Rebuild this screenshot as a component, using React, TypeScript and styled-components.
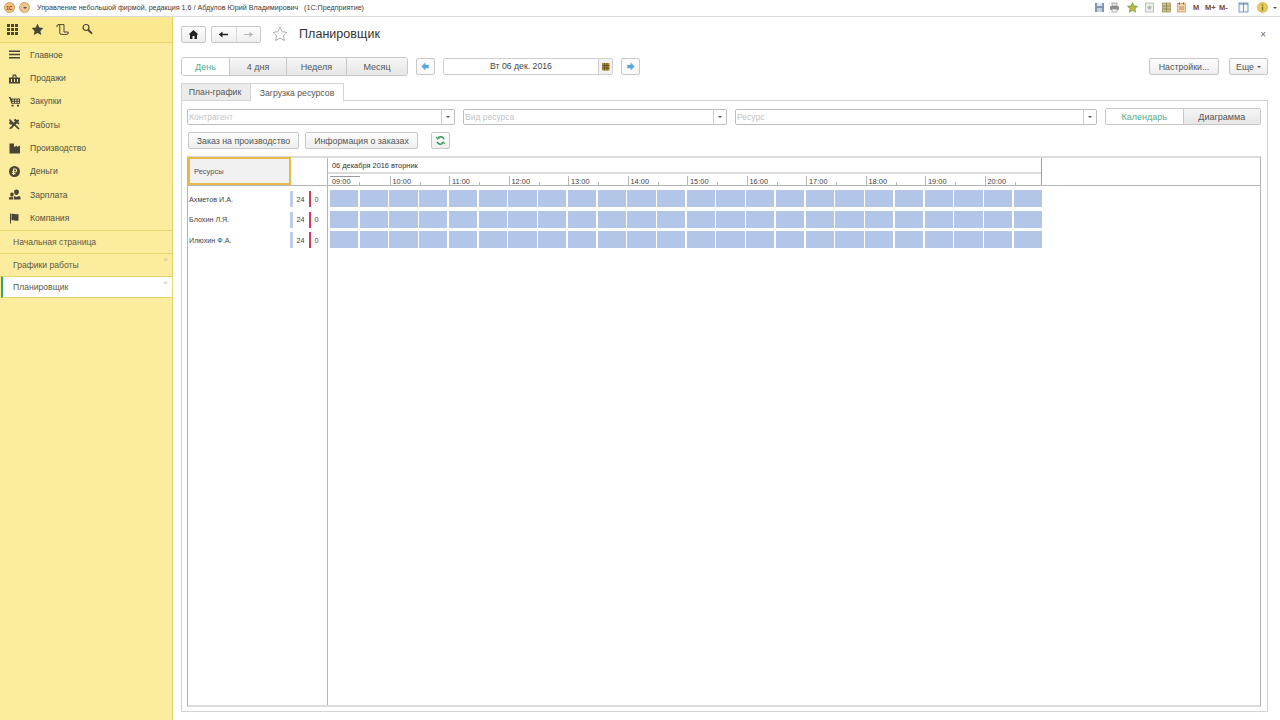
import React from 'react';
import styled, { createGlobalStyle } from 'styled-components';

const Global = createGlobalStyle`
  html, body { margin: 0; padding: 0; background: #fff; }
  body { font-family: "Liberation Sans", Arial, sans-serif; color: #4a4a4a; overflow: hidden; }
  * { box-sizing: border-box; }
`;

const Page = styled.div`width: 1280px; height: 720px; display: flex; flex-direction: column; overflow: hidden;`;

const TitleBar = styled.div`
  height: 17px; flex: none; display: flex; align-items: center; padding: 0 3px 1px 4px;
  background: #fff; border-bottom: 1px solid #d9d9d9;
`;
const Orb = styled.div<{ $c: string }>`
  width: 11px; height: 11px; border-radius: 50%; flex: none; margin-right: 4px;
  background: ${p => p.$c}; border: 1px solid #c9a36a; display: flex; align-items: center; justify-content: center;
  font-size: 5px; font-weight: 700; color: #c0281c;
`;
const TitleText = styled.div`font-size: 7.15px; margin-left: 3px; color: #3a3a3a; white-space: pre; flex: 1;`;
const Tools = styled.div`display: flex; align-items: center; height: 14px;`;
const ToolIcon = styled.svg<{ $ml: number }>`width: 11px; height: 11px; flex: none; margin-left: ${p => p.$ml}px;`;
const MemText = styled.span<{ $ml: number }>`font-size: 7.5px; font-weight: 700; color: #7a4a2a; margin-left: ${p => p.$ml}px; width: 10px; white-space: nowrap;`;
const ToolCaret = styled.i`width: 0; height: 0; border: 2px solid transparent; border-top: 2.5px solid #555; border-bottom: 0; display: block; margin-left: 5px;`;

const Body = styled.div`flex: 1; display: flex; min-height: 0;`;

const Sidebar = styled.aside`
  width: 173px; flex: none; background: #fbec9e; border-right: 1px solid #e3d270;
  display: flex; flex-direction: column;
`;
const SideTop = styled.div`
  height: 26px; display: flex; align-items: center; padding-left: 6px; gap: 12px;
  border-bottom: 1px solid #e5d36c; background: #fbe98f; flex: none;
`;
const SideIcon = styled.svg`width: 13px; height: 13px; flex: none; color: #4a4536;`;
const Nav = styled.nav`height: 187px; flex: none; display: flex; flex-direction: column;`;
const NavRow = styled.div`
  height: 23.35px; flex: none; display: flex; align-items: center; padding-left: 8px; gap: 9px;
  font-size: 8.6px; color: #55513f;
`;
const NavIcon = styled.svg`width: 13px; height: 13px; flex: none; color: #4a4536;`;
const OpenTab = styled.div<{ $active?: boolean }>`
  position: relative; height: 22.8px; flex: none; display: flex; align-items: center; padding-left: 13px;
  font-size: 8.6px; color: #5f5a46;
  background: ${p => (p.$active ? '#fff' : '#fbec9e')};
  border-top: 1px solid #e5d36c;
  ${p => p.$active ? 'border-left: 2px solid #2ea876; padding-left: 10px; margin-left: 1px; border-bottom: 1px solid #e5d36c;' : ''}
`;
const TabClose = styled.span`position: absolute; right: 4px; top: 1px; font-size: 8px; color: #c9c09a;`;

const Main = styled.main`flex: 1; min-width: 0; display: flex; flex-direction: column; padding: 8px 12px 8px 8px;`;

const HeadRow = styled.div`height: 18px; flex: none; display: flex; align-items: center;`;
const SmallBtn = styled.div`
  height: 17px; display: flex; align-items: center; justify-content: center;
  border: 1px solid #c8c8c8; border-radius: 2px; background: linear-gradient(#fdfdfd, #eeeeee);
`;
const HomeBtn = styled(SmallBtn)`width: 25px;`;
const NavPair = styled(SmallBtn)`width: 50px; margin-left: 5px;`;
const NavHalf = styled.div<{ $sep?: boolean }>`
  flex: 1; height: 100%; display: flex; align-items: center; justify-content: center;
  ${p => p.$sep ? 'border-right: 1px solid #d8d8d8;' : ''}
`;
const Glyph = styled.svg`width: 11px; height: 11px; flex: none;`;
const StarWrap = styled.svg`width: 16px; height: 16px; margin-left: 11px; flex: none;`;
const PageTitle = styled.div`font-size: 12.5px; color: #333; margin-left: 11px; letter-spacing: .05px; flex: 1;`;
const CloseX = styled.div`font-size: 10px; color: #666; margin-right: 2px;`;

const PeriodRow = styled.div`height: 19px; margin-top: 14px; flex: none; display: flex; align-items: center;`;
const Segments = styled.div`display: flex; height: 19px; border: 1px solid #c8c8c8; border-radius: 3px; overflow: hidden;`;
const Segment = styled.div<{ $w: number; $on?: boolean }>`
  width: ${p => p.$w}px; display: flex; align-items: center; justify-content: center; font-size: 9px;
  color: ${p => (p.$on ? '#4fae8a' : '#555')};
  background: ${p => (p.$on ? '#fff' : 'linear-gradient(#f6f6f6, #e6e6e6)')};
  & + & { border-left: 1px solid #c8c8c8; }
`;
const ArrowBtn = styled(SmallBtn)<{ $ml: number }>`width: 19px; margin-left: ${p => p.$ml}px; background: #fbfbfb;`;
const DateField = styled.div`
  width: 170px; height: 17px; margin-left: 8px; display: flex; border: 1px solid #cfcfcf; border-radius: 2px; background: #fff;
`;
const DateText = styled.div`flex: 1; text-align: center; font-size: 8.7px; line-height: 15px; color: #444;`;
const CalBtn = styled.div`width: 14px; border-left: 1px solid #cfcfcf; background: #f2f2f2; display: flex; align-items: center; justify-content: center;`;
const Spacer = styled.div`flex: 1;`;
const TextBtn = styled(SmallBtn)<{ $w: number; $ml?: number }>`
  width: ${p => p.$w}px; margin-left: ${p => p.$ml ?? 0}px; font-size: 8.8px; color: #555; white-space: nowrap;
`;
const BtnCaret = styled.i`width: 0; height: 0; border: 2px solid transparent; border-top: 2.5px solid #555; border-bottom: 0; display: block; margin-left: 3px;`;

const TabsRow = styled.div`height: 18px; margin-top: 7px; flex: none; display: flex; align-items: flex-end; position: relative; z-index: 1;`;
const Tab = styled.div<{ $w: number; $on?: boolean }>`
  width: ${p => p.$w}px; height: 18px; display: flex; align-items: center; justify-content: center;
  font-size: 8.7px; color: #555; border: 1px solid #d4d4d4;
  ${p => p.$on ? 'background: #fff; border-bottom-color: #fff; border-left: 0; height: 19px; margin-bottom: -1px;' : 'background: #ececec; padding-right: 2px;'}
`;

const Panel = styled.section`
  flex: 1; min-height: 0; margin-top: -1px; border: 1px solid #d4d4d4; display: flex; flex-direction: column;
  padding: 7px 6px 4px 5px;
`;
const FilterRow = styled.div`height: 17px; flex: none; display: flex; align-items: center;`;
const Combo = styled.div<{ $w: number; $ml?: number }>`
  width: ${p => p.$w}px; height: 16px; margin-left: ${p => p.$ml ?? 0}px; display: flex;
  border: 1px solid #bdbdbd; border-radius: 2px; background: #fff;
`;
const ComboText = styled.div`flex: 1; font-size: 8.5px; line-height: 14px; padding-left: 1px; color: #c4c4c4;`;
const ComboDrop = styled.div`width: 13px; border-left: 1px solid #cfcfcf; display: flex; align-items: center; justify-content: center;`;
const Caret = styled.i`width: 0; height: 0; border: 2px solid transparent; border-top: 2.5px solid #555; border-bottom: 0; display: block;`;
const ViewSwitch = styled.div`
  margin-left: 8px; display: flex; height: 17px; width: 156px; border: 1px solid #c8c8c8; border-radius: 2px; overflow: hidden;
`;
const ViewOpt = styled.div<{ $on?: boolean }>`
  flex: 1; display: flex; align-items: center; justify-content: center; font-size: 9px;
  color: ${p => (p.$on ? '#4fae8a' : '#555')};
  background: ${p => (p.$on ? '#fff' : 'linear-gradient(#f6f6f6, #e6e6e6)')};
  & + & { border-left: 1px solid #c8c8c8; }
`;
const ActionRow = styled.div`height: 17px; margin-top: 7px; padding-left: 1px; flex: none; display: flex; align-items: center;`;

const Grid = styled.div`
  flex: 1; min-height: 0; margin-top: 7px; display: flex; flex-direction: column; background: #fff;
  border: 1px solid #b5b5b5; border-top: 2px solid #dcdcdc; border-bottom: 2px solid #dcdcdc; width: 1074px;
`;
const GridHead = styled.div`height: 27px; flex: none; display: flex; border-bottom: 1px solid #b5b5b5; box-sizing: content-box;`;
const ResHead = styled.div`
  width: 103px; height: 28px; margin-top: -1px; flex: none; border: 2px solid #e6bb45; background: #f1f1f1;
  padding: 1px 0 0 4px; display: flex; align-items: center; font-size: 7.5px; color: #555;
`;
const ResGap = styled.div`width: 37px; flex: none; border-right: 1px solid #b5b5b5;`;
const TimeHead = styled.div`width: 714px; flex: none; border-right: 1px solid #9d9d9d; display: flex; flex-direction: column; overflow: hidden;`;
const DateLine = styled.div`height: 16px; flex: none; padding: 3px 0 0 4px; font-size: 7.4px; line-height: 10px; color: #333; border-bottom: 2px solid #dcdcdc;`;
const Hours = styled.div`flex: 1; margin-top: 2px; display: grid; grid-template-columns: repeat(12, 59.5px); padding-left: 2px;`;
const Hour = styled.div<{ $first?: boolean }>`
  position: relative; font-size: 7.4px; line-height: 9px; color: #444; padding: 1px 0 0 2px;
  border-left: 1px solid #b5b5b5;
  ${p => p.$first ? 'border-left: 0; background: linear-gradient(#9a9a9a, #9a9a9a) 0 0 / 30px 1px no-repeat;' : ''}
  &::after { content: ''; position: absolute; left: 29px; bottom: 1px; height: 3px; border-left: 1px solid #b5b5b5; }
`;
const GridBody = styled.div`flex: 1; min-height: 0; display: flex;`;
const ResCol = styled.div`width: 140px; flex: none; border-right: 1px solid #b5b5b5; padding-top: 3px;`;
const ResRow = styled.div`height: 20.5px; display: flex; align-items: center; font-size: 7.2px; color: #444;`;
const ResName = styled.div`width: 102px; padding-left: 1px; white-space: nowrap;`;
const LoadBar = styled.i<{ $red?: boolean }>`
  display: block; flex: none; height: 16px; width: ${p => (p.$red ? 2 : 3)}px;
  background: ${p => (p.$red ? '#d23a5e' : '#c0cbe6')};
`;
const LoadNum = styled.span<{ $w: number }>`width: ${p => p.$w}px; padding-right: 1px; text-align: center; color: #444;`;
const Chart = styled.div`width: 712px; margin-left: 2px; padding-top: 4px; flex: none;`;
const ChartRow = styled.div`height: 20.5px; display: grid; grid-template-columns: repeat(24, 1fr); column-gap: 1.5px;`;
const Slot = styled.div`height: 17px; background: #b4c6e8;`;

const Save = (
  <>
    <rect x="1" y="1" width="9" height="9" fill="#7f97b5" />
    <rect x="3" y="1" width="5" height="3" fill="#dfe7f0" />
    <rect x="3" y="6" width="5" height="4" fill="#c5d0de" />
  </>
);
const Print = (
  <>
    <rect x="3" y="1" width="5" height="3" fill="#e3e3e3" stroke="#888" strokeWidth=".6" />
    <rect x="1" y="4" width="9" height="4" rx="1" fill="#8d8d8d" />
    <rect x="3" y="7" width="5" height="3" fill="#f2f2f2" stroke="#888" strokeWidth=".6" />
  </>
);
const GreenStar = (
  <>
    <path d="M5.5 .5l1.6 3.3 3.5.5-2.6 2.4.7 3.6-3.2-1.8-3.2 1.8.7-3.6L.4 4.3l3.5-.5z" fill="#a3b94a" stroke="#5e8d2f" strokeWidth=".5" />
    <rect x="4" y="5" width="3" height="3" fill="#e6a93c" />
  </>
);
const DocStar = (
  <>
    <rect x="1.5" y="1" width="8" height="9" fill="#eef0ec" stroke="#a3aca5" strokeWidth=".7" />
    <path d="M5.5 3l.8 1.6 1.7.2-1.2 1.2.3 1.7-1.6-.8-1.6.8.3-1.7L3 4.8l1.7-.2z" fill="#aab7a8" />
  </>
);
const Table = (
  <>
    <rect x="1.5" y="1" width="8" height="9" fill="#d9c08a" stroke="#9b8a55" strokeWidth=".7" />
    <path d="M1.5 4h8M1.5 7h8M5.5 1v9" stroke="#6e7a4a" strokeWidth=".7" />
  </>
);
const CalOrange = (
  <>
    <rect x="1.5" y="1.5" width="8" height="8.5" fill="#f4d4b0" stroke="#cf8a4a" strokeWidth=".7" />
    <path d="M3.5 .5v2M7.5 .5v2" stroke="#b5452b" strokeWidth="1" />
    <path d="M3 5h5M3 7h5" stroke="#c8703c" strokeWidth=".8" />
  </>
);
const PanelIco = (
  <>
    <rect x="1" y="1" width="9" height="9" fill="#f1f6fb" stroke="#5f86ad" strokeWidth=".8" />
    <path d="M5.5 1v9" stroke="#5f86ad" strokeWidth=".8" />
    <path d="M1 2h9" stroke="#5f86ad" strokeWidth="1" />
  </>
);
const Info = (
  <>
    <circle cx="5.5" cy="5.5" r="5" fill="#eec65a" stroke="#c79a38" strokeWidth=".6" />
    <rect x="4.8" y="4.6" width="1.4" height="4" fill="#5c8a2e" />
    <rect x="4.8" y="2.4" width="1.4" height="1.4" fill="#5c8a2e" />
  </>
);

const navItems: [string, React.ReactNode][] = [
  ['Главное', <path d="M1 2.5h11v1.4H1zM1 5.800h11v1.400H1zM1 9.100h11v1.400H1z" fill="currentColor" />],
  ['Продажи', <path d="M1 5.500h11v6H1zM4 5.500l1-3h3l1 3H7.700l-.6-1.800H5.900L5.300 5.500zM3 7v3h1V7zM6 7v3h1V7zM9 7v3h1V7z" fillRule="evenodd" fill="currentColor" />],
  ['Закупки', <path d="M1 2h1.600l.4 1.400h9v5.400H3.400L1.600 3.200H1zM4.400 4.400v1.300h1.500V4.400zM7 4.400v1.300h1.500V4.400zM9.600 4.400v1.300h1.400V4.400zM4.400 6.700V8h1.500V6.700zM7 6.700V8h1.500V6.700zM9.600 6.700V8h1.400V6.700zM3.500 9.700h2v1.800h-2zM9 9.700h2v1.800H9z" fillRule="evenodd" fill="currentColor" />],
  ['Работы', <path d="M2 1l3.700 3.700 1.300-1.300L5.700 2 7.500.8l1.200 1.200 1.900-.6.600.8-1 1.800 1.400 1.400-1.200 1.200-1.500-1.400-1.300 1.300 4 3.900-1.200 1.200-4-3.900-3.300 3.400L1 10.600l3.300-3.400-1-1-.9.6L.8 5 2 3.800 1 2z" fill="currentColor" />],
  ['Производство', <path d="M1.500 1.500h4.500v3.600l3-1.600v1.600l3-1.600v8H1.500z" fill="currentColor" />],
  ['Деньги', <path d="M6.500 1a5.500 5.500 0 1 0 0 11 5.500 5.500 0 0 0 0-11zM5 3.500h2.300a1.900 1.900 0 0 1 0 3.800H6.200v.8h1.400v1H6.200v1H5v-1H4v-1h1v-.8H4v-1h1zM6.200 4.500v1.800h1a.9.9 0 0 0 0-1.800z" fillRule="evenodd" fill="currentColor" />],
  ['Зарплата', <path d="M8.500 1.500a2.400 2.400 0 0 1 2.400 2.600c0 1.500-1 2.900-2.400 2.900S6.100 5.600 6.100 4.100A2.400 2.400 0 0 1 8.500 1.500zM4 4.500a1.800 1.800 0 0 1 1.800 2c0 1.100-.8 2.100-1.800 2.100S2.200 7.600 2.200 6.500A1.800 1.800 0 0 1 4 4.500zM6 8l2.500 1L11 8l1.500 1v2.500H6zM1 9.500l3-.5 1.200.5v2H1z" fill="currentColor" />],
  ['Компания', <path d="M2 1.500h1v10H2zM3.500 2c2-1 4 1 7 0v6.500c-3 1-5-1-7 0z" fill="currentColor" />],
];

const hours = ['09:00','10:00','11:00','12:00','13:00','14:00','15:00','16:00','17:00','18:00','19:00','20:00'];
const people = ['Ахметов И.А.', 'Блохин Л.Я.', 'Илюхин Ф.А.'];
const slots = Array.from({ length: 24 }, (_, i) => i);

export default function App() {
  return (
    <Page>
      <Global />
      <TitleBar>
        <Orb $c="#f4c27a">1С</Orb>
        <Orb $c="#eec48e"><Caret /></Orb>
        <TitleText>{'Управление небольшой фирмой, редакция 1.6 / Абдулов Юрий Владимирович   (1С:Предприятие)'}</TitleText>
        <Tools>
          <ToolIcon $ml={0} viewBox="0 0 11 11">{Save}</ToolIcon>
          <ToolIcon $ml={4} viewBox="0 0 11 11">{Print}</ToolIcon>
          <ToolIcon $ml={7} viewBox="0 0 11 11">{GreenStar}</ToolIcon>
          <ToolIcon $ml={6} viewBox="0 0 11 11">{DocStar}</ToolIcon>
          <ToolIcon $ml={6} viewBox="0 0 11 11">{Table}</ToolIcon>
          <ToolIcon $ml={4} viewBox="0 0 11 11">{CalOrange}</ToolIcon>
          <MemText $ml={6}>M</MemText>
          <MemText $ml={2}>M+</MemText>
          <MemText $ml={4}>M-</MemText>
          <ToolIcon $ml={9} viewBox="0 0 11 11">{PanelIco}</ToolIcon>
          <ToolIcon $ml={8} viewBox="0 0 11 11">{Info}</ToolIcon>
          <ToolCaret />
        </Tools>
      </TitleBar>
      <Body>
        <Sidebar>
          <SideTop>
            <SideIcon viewBox="0 0 13 13">
              <path d="M1 1h3v3H1zM5 1h3v3H5zM9 1h3v3H9zM1 5h3v3H1zM5 5h3v3H5zM9 5h3v3H9zM1 9h3v3H1zM5 9h3v3H5zM9 9h3v3H9z" fill="currentColor" />
            </SideIcon>
            <SideIcon viewBox="0 0 13 13">
              <path d="M6.500 .8l1.800 3.800 4.100.5-3 2.800.8 4.100-3.700-2.100-3.700 2.100.8-4.100-3-2.800 4.100-.5z" fill="currentColor" />
            </SideIcon>
            <SideIcon viewBox="0 0 13 13" fill="none" stroke="currentColor" strokeWidth="1">
              <path d="M1 4.200V3a1.400 1.400 0 0 1 2.800 0V10a1.400 1.400 0 0 0 1.400 1.400H11a1.400 1.400 0 0 0 1.200-1.400V9H8V1.600H2.400" />
            </SideIcon>
            <SideIcon viewBox="0 0 13 13" fill="none" stroke="currentColor" strokeWidth="1.200">
              <circle cx="5" cy="4.500" r="3" />
              <path d="M7.300 7l3.700 3.700" strokeWidth="1.900" />
            </SideIcon>
          </SideTop>
          <Nav>
            {navItems.map(([label, icon]) => (
              <NavRow key={label}>
                <NavIcon viewBox="0 0 13 13">{icon}</NavIcon>
                {label}
              </NavRow>
            ))}
          </Nav>
          <OpenTab>Начальная страница</OpenTab>
          <OpenTab>Графики работы<TabClose>×</TabClose></OpenTab>
          <OpenTab $active>Планировщик<TabClose>×</TabClose></OpenTab>
        </Sidebar>
        <Main>
          <HeadRow>
            <HomeBtn>
              <Glyph viewBox="0 0 11 11"><path d="M5.500 1L10.500 5.500H9V10H6.500V7h-2v3H2V5.500H.5z" fill="#222" /></Glyph>
            </HomeBtn>
            <NavPair>
              <NavHalf $sep>
                <Glyph viewBox="0 0 11 11"><path d="M10 4.700H4.500V2.500L.8 5.500l3.700 3V6.300H10z" fill="#222" /></Glyph>
              </NavHalf>
              <NavHalf>
                <Glyph viewBox="0 0 11 11"><path d="M1 4.900h5.500V2.800l3.500 2.700-3.500 2.700V6.100H1z" fill="#b5b5b5" /></Glyph>
              </NavHalf>
            </NavPair>
            <StarWrap viewBox="0 0 16 16">
              <path d="M8 1.200l2.100 4.500 4.900.6-3.600 3.300 1 4.900L8 12.100l-4.400 2.400 1-4.900L1 6.300l4.900-.6z" fill="#fff" stroke="#b0b0b0" />
            </StarWrap>
            <PageTitle>Планировщик</PageTitle>
            <CloseX>×</CloseX>
          </HeadRow>
          <PeriodRow>
            <Segments>
              <Segment $w={47} $on>День</Segment>
              <Segment $w={57}>4 дня</Segment>
              <Segment $w={60}>Неделя</Segment>
              <Segment $w={61}>Месяц</Segment>
            </Segments>
            <ArrowBtn $ml={8}>
              <Glyph viewBox="0 0 11 11"><path d="M1.500 5.500l3.800-4v2.300h3.400v3.400H5.300v2.300z" fill="#5ba6dd" /></Glyph>
            </ArrowBtn>
            <DateField>
              <DateText>Вт 06 дек. 2016</DateText>
              <CalBtn>
                <Glyph viewBox="0 0 11 11">
                  <rect x="2" y="2" width="7.500" height="7.500" fill="#b38a3a" />
                  <path d="M2 4.500h7.500M2 7h7.500M4.500 2v7.500M7 2v7.500" stroke="#5c4a20" strokeWidth=".8" />
                </Glyph>
              </CalBtn>
            </DateField>
            <ArrowBtn $ml={8}>
              <Glyph viewBox="0 0 11 11"><path d="M9.500 5.500l-3.800-4v2.300H2.300v3.400h3.400v2.300z" fill="#5ba6dd" /></Glyph>
            </ArrowBtn>
            <Spacer />
            <TextBtn $w={70}>Настройки...</TextBtn>
            <TextBtn $w={39} $ml={10}>Еще<BtnCaret /></TextBtn>
          </PeriodRow>
          <TabsRow>
            <Tab $w={70}>План-график</Tab>
            <Tab $w={93} $on>Загрузка ресурсов</Tab>
          </TabsRow>
          <Panel>
            <FilterRow>
              <Combo $w={268}><ComboText>Контрагент</ComboText><ComboDrop><Caret /></ComboDrop></Combo>
              <Combo $w={264} $ml={8}><ComboText>Вид ресурса</ComboText><ComboDrop><Caret /></ComboDrop></Combo>
              <Combo $w={362} $ml={8}><ComboText>Ресурс</ComboText><ComboDrop><Caret /></ComboDrop></Combo>
              <ViewSwitch>
                <ViewOpt $on>Календарь</ViewOpt>
                <ViewOpt>Диаграмма</ViewOpt>
              </ViewSwitch>
            </FilterRow>
            <ActionRow>
              <TextBtn $w={111}>Заказ на производство</TextBtn>
              <TextBtn $w={113} $ml={6}>Информация о заказах</TextBtn>
              <TextBtn $w={19} $ml={13}>
                <Glyph viewBox="0 0 11 11" fill="none" stroke="#2f9a55" strokeWidth="1.400">
                  <path d="M9 4.200A3.600 3.600 0 0 0 2.500 3.500M2 6.800a3.600 3.600 0 0 0 6.500.7" />
                  <path d="M1.300 1.800l1 2.400 2.300-.8M9.700 9.200l-1-2.400-2.300.8" strokeWidth=".9" />
                </Glyph>
              </TextBtn>
            </ActionRow>
            <Grid>
              <GridHead>
                <ResHead>Ресурсы</ResHead>
                <ResGap />
                <TimeHead>
                  <DateLine>06 декабря 2016 вторник</DateLine>
                  <Hours>
                    {hours.map((h, i) => <Hour key={h} $first={i === 0}>{h}</Hour>)}
                  </Hours>
                </TimeHead>
              </GridHead>
              <GridBody>
                <ResCol>
                  {people.map(p => (
                    <ResRow key={p}>
                      <ResName>{p}</ResName>
                      <LoadBar />
                      <LoadNum $w={16}>24</LoadNum>
                      <LoadBar $red />
                      <LoadNum $w={12}>0</LoadNum>
                    </ResRow>
                  ))}
                </ResCol>
                <Chart>
                  {people.map(p => (
                    <ChartRow key={p}>{slots.map(s => <Slot key={s} />)}</ChartRow>
                  ))}
                </Chart>
              </GridBody>
            </Grid>
          </Panel>
        </Main>
      </Body>
    </Page>
  );
}
